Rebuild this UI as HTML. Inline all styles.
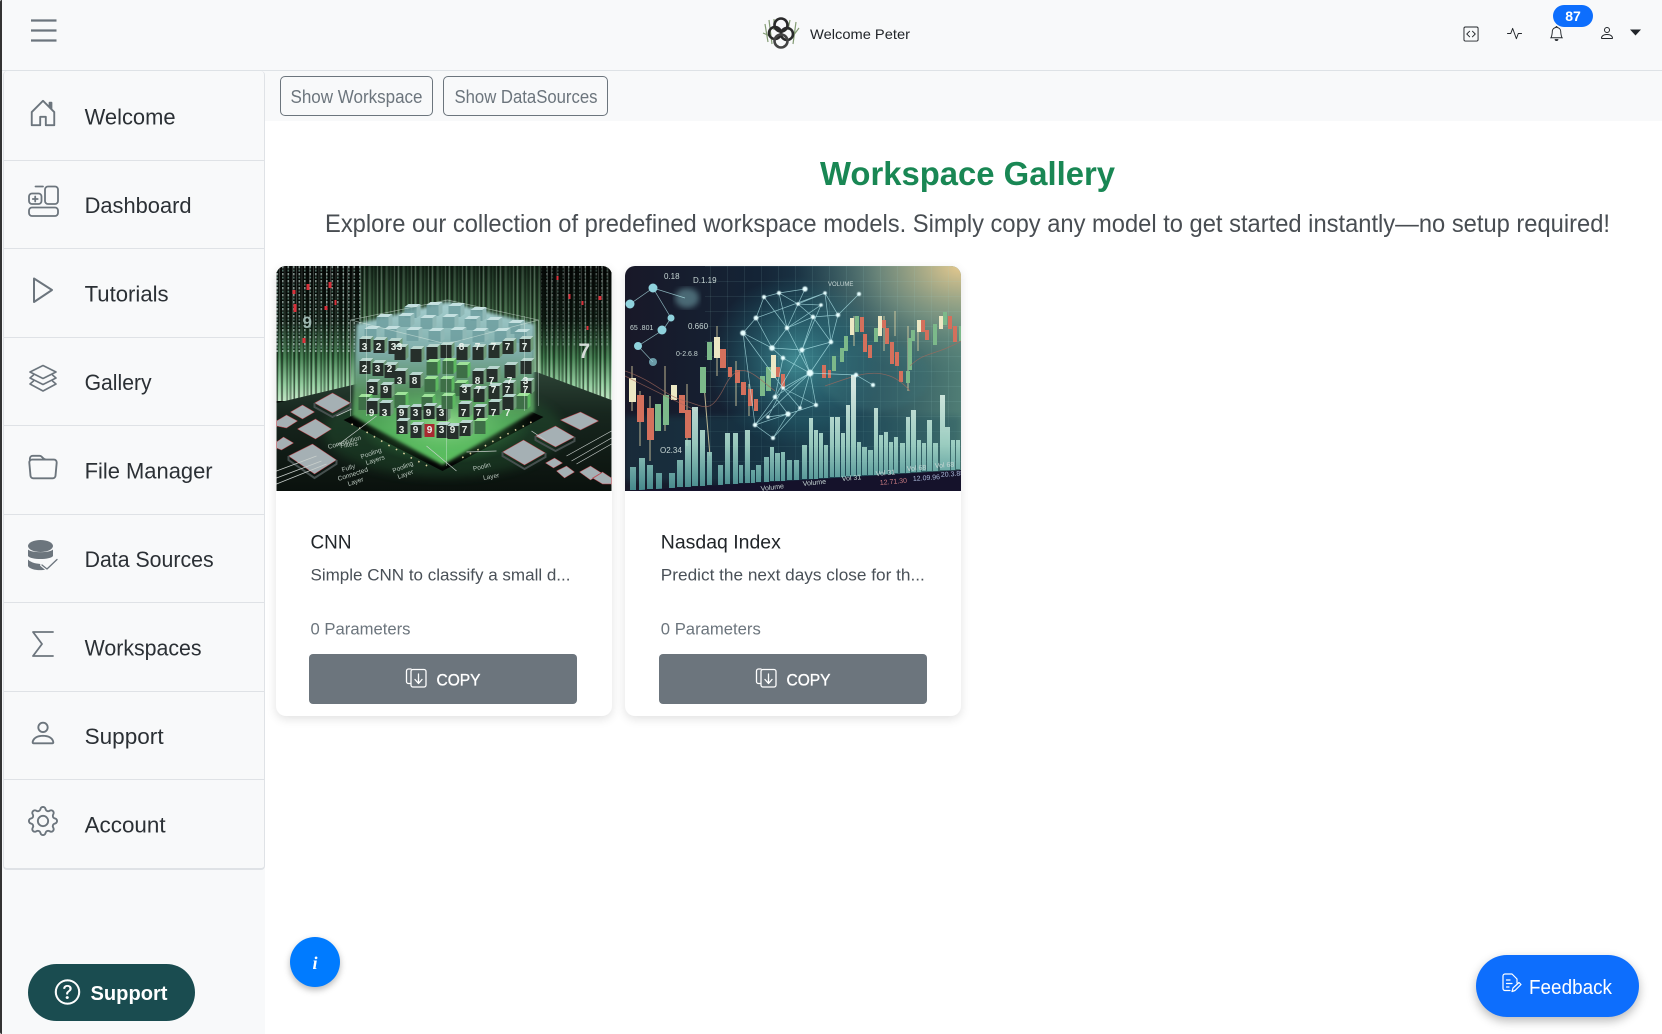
<!DOCTYPE html>
<html lang="en"><head><meta charset="utf-8"><title>Workspace Gallery</title>
<style>
html,body{margin:0;padding:0;width:1662px;height:1034px;overflow:hidden;background:#fff;font-family:"Liberation Sans",sans-serif}
.a{position:absolute;box-sizing:border-box}
#overlay{position:absolute;left:0;top:0;z-index:5}
#overlay text{font-family:"Liberation Sans",sans-serif}
.item{position:absolute;left:0;width:100%;border-bottom:1px solid #dfe2e6;box-sizing:border-box}
.card{position:absolute;top:266px;height:450px;background:#fff;border-radius:10px;box-shadow:0 3px 10px rgba(0,0,0,.12);overflow:hidden}
.card svg{display:block}
.btn{position:absolute;top:654px;width:268px;height:50px;background:#6c757d;border-radius:4px}
.ob{position:absolute;top:76px;height:39.5px;border:1px solid #6c757d;border-radius:5px;box-sizing:border-box}
</style></head><body>
<div class="a" style="left:0;top:0;width:1662px;height:71px;background:#f8f9fa;border-bottom:1px solid #dee2e6"></div>
<div class="a" style="left:264px;top:71px;width:1398px;height:50px;background:#f8f9fa"></div>
<div class="a" style="left:2px;top:71px;width:263px;height:963px;background:#f8f9fa"></div>
<div class="a" style="left:3px;top:71px;width:262px;height:799px;background:#f8f9fa;border:1px solid #dfe2e6;border-bottom-width:2px;border-top:0;border-radius:4px;overflow:hidden">
<div class="item" style="top:0;height:90px"></div>
<div class="item" style="top:90px;height:88px"></div>
<div class="item" style="top:178px;height:89px"></div>
<div class="item" style="top:267px;height:88px"></div>
<div class="item" style="top:355px;height:89px"></div>
<div class="item" style="top:444px;height:88px"></div>
<div class="item" style="top:532px;height:89px"></div>
<div class="item" style="top:621px;height:88px"></div>
</div>
<div class="a" style="left:0;top:0;width:2.3px;height:1034px;background:#333;border-radius:2px 0 0 2px"></div>
<div class="ob" style="left:280px;width:152.5px"></div>
<div class="ob" style="left:443px;width:165px"></div>

<div class="card" style="left:276px;width:335.5px"><svg width="336" height="225" viewBox="0 0 335 225">
<defs>
<linearGradient id="s1" x1="0" y1="0" x2="0" y2="1"><stop offset="0" stop-color="#050806"/><stop offset=".4" stop-color="#0d1a11"/><stop offset=".68" stop-color="#3f7a4c"/><stop offset=".88" stop-color="#8cc898"/><stop offset="1" stop-color="#bde3c0"/></linearGradient>
<linearGradient id="s2" x1="0" y1="0" x2="0" y2="1"><stop offset="0" stop-color="#1a2f20"/><stop offset=".45" stop-color="#44704a"/><stop offset=".8" stop-color="#8fc294"/><stop offset="1" stop-color="#d0ecd0"/></linearGradient>
<linearGradient id="fl" x1="0" y1="0" x2="0" y2="1"><stop offset="0" stop-color="#2c4235"/><stop offset=".35" stop-color="#17261e"/><stop offset="1" stop-color="#0a110d"/></linearGradient>
<linearGradient id="gl" x1="0" y1="0" x2="0" y2="1"><stop offset="0" stop-color="#a6cfd0"/><stop offset=".3" stop-color="#7fadaa"/><stop offset=".55" stop-color="#568f5e"/><stop offset=".8" stop-color="#4ea555"/><stop offset="1" stop-color="#5fc260"/></linearGradient>
<radialGradient id="gw"><stop offset="0" stop-color="#b5f5a8" stop-opacity=".7"/><stop offset="1" stop-color="#3fbf55" stop-opacity="0"/></radialGradient>
<pattern id="st" width="17" height="20" patternUnits="userSpaceOnUse"><rect x="0" width="1.5" height="20" fill="#000" opacity=".55"/><rect x="2.5" width=".8" height="20" fill="#fff" opacity=".25"/><rect x="4.5" width="2" height="20" fill="#000" opacity=".45"/><rect x="8" width=".8" height="20" fill="#fff" opacity=".18"/><rect x="10" width="1.2" height="20" fill="#000" opacity=".5"/><rect x="13" width="2" height="20" fill="#000" opacity=".35"/><rect x="15.6" width=".7" height="20" fill="#fff" opacity=".22"/></pattern>
<pattern id="cd" width="5.5" height="7" patternUnits="userSpaceOnUse"><rect x="0" y="0" width="1.6" height="2.4" fill="#cfe7e0" opacity=".6"/><rect x="0" y="3.6" width="1.6" height="2" fill="#8fc0b0" opacity=".55"/></pattern>
<filter id="b1"><feGaussianBlur stdDeviation="1.6"/></filter>
<filter id="b3"><feGaussianBlur stdDeviation="5"/></filter>
<symbol id="b" overflow="visible"><path d="M0 3h11v13H0z" fill="#262f2b"/><path d="M0 3l3-3h11l-3 3z" fill="#b9d6cf"/><path d="M11 3l3-3v13l-3 3z" fill="#6f9a78"/></symbol>
<symbol id="t" overflow="visible"><path d="M0 3h12v11H0z" fill="#6f9fa0" opacity=".85"/><path d="M0 3l4-3h12l-4 3z" fill="#c4e0e0"/><path d="M12 3l4-3v11l-4 3z" fill="#8fb8b6"/></symbol>
<symbol id="g" overflow="visible"><path d="M0 3h11v13H0z" fill="#3e6f47"/><path d="M0 3l3-3h11l-3 3z" fill="#9fe39a"/><path d="M11 3l3-3v13l-3 3z" fill="#5cb860"/></symbol>
</defs>
<rect width="335" height="225" fill="#070b08"/>
<rect width="335" height="135" fill="url(#s1)"/>
<rect x="84" width="180" height="135" fill="url(#s2)"/>
<rect width="335" height="135" fill="url(#st)"/>
<rect x="0" y="0" width="84" height="86" fill="url(#cd)"/>
<rect x="265" y="0" width="70" height="80" fill="url(#cd)" opacity=".55"/>
<path d="M30 18h3v6h-3zM52 16h3v6h-3zM17 38h3v8h-3zM26 72h3v5h-3zM58 34h2v5h-2zM292 28h2v5h-2zM305 35h2v4h-2zM322 30h3v4h-3zM310 60h2v4h-2zM280 10h2v4h-2zM16 24h3v4h-3zM48 40h3v4h-3z" fill="#d8303a"/>
<text x="26" y="62" font-size="17" fill="#9fb9b2" font-weight="bold">9</text>
<text x="302" y="92" font-size="21" fill="#d5dcd8" font-weight="bold">7</text>
<path d="M0 137 80 118 260 106 335 134V225H0Z" fill="url(#fl)"/>
<ellipse cx="167" cy="165" rx="120" ry="46" fill="#2c6a3a" opacity=".3" filter="url(#b3)"/>
<path d="M67 154 167 108 267 151 166 205Z" fill="#040605"/>
<path d="M80 58 171 36 258 58V145L166 199 76 150Z" fill="url(#gl)" filter="url(#b1)"/>
<ellipse cx="168" cy="158" rx="88" ry="40" fill="url(#gw)"/>
<g>
<use href="#t" x="128" y="38"/><use href="#t" x="150" y="36"/><use href="#t" x="172" y="37"/><use href="#t" x="194" y="41"/>
<use href="#t" x="100" y="48"/><use href="#t" x="122" y="47"/><use href="#t" x="144" y="49"/><use href="#t" x="166" y="48"/><use href="#t" x="188" y="50"/><use href="#t" x="210" y="51"/><use href="#t" x="232" y="54"/>
<use href="#t" x="88" y="60"/><use href="#t" x="108" y="60"/><use href="#t" x="130" y="61"/><use href="#t" x="152" y="62"/><use href="#t" x="174" y="61"/><use href="#t" x="196" y="62"/><use href="#t" x="218" y="62"/><use href="#t" x="238" y="63"/>
<use href="#b" x="83" y="70"/><use href="#b" x="97" y="71"/><use href="#b" x="112" y="72"/><use href="#b" x="118" y="78"/><use href="#b" x="134" y="80"/><use href="#b" x="150" y="78"/><use href="#b" x="164" y="76"/><use href="#b" x="180" y="78"/><use href="#b" x="196" y="78"/><use href="#b" x="212" y="76"/><use href="#b" x="226" y="72"/><use href="#b" x="243" y="70"/>
<use href="#g" x="150" y="93"/><use href="#g" x="166" y="92"/><use href="#g" x="180" y="96"/>
<use href="#b" x="83" y="92"/><use href="#b" x="96" y="94"/><use href="#b" x="108" y="96"/><use href="#b" x="118" y="102"/><use href="#b" x="133" y="106"/><use href="#b" x="196" y="102"/><use href="#b" x="210" y="100"/><use href="#b" x="228" y="96"/><use href="#b" x="244" y="92"/>
<use href="#g" x="148" y="110"/><use href="#g" x="164" y="110"/><use href="#g" x="178" y="114"/>
<use href="#b" x="90" y="113"/><use href="#b" x="104" y="116"/><use href="#b" x="183" y="118"/><use href="#b" x="197" y="120"/><use href="#b" x="212" y="117"/><use href="#b" x="226" y="114"/><use href="#b" x="244" y="112"/>
<use href="#g" x="82" y="128"/><use href="#b" x="90" y="132"/><use href="#b" x="103" y="134"/><use href="#g" x="118" y="126"/><use href="#b" x="120" y="139"/><use href="#b" x="134" y="138"/><use href="#g" x="145" y="128"/><use href="#b" x="147" y="137"/><use href="#b" x="160" y="139"/><use href="#g" x="165" y="127"/><use href="#b" x="182" y="135"/><use href="#b" x="197" y="138"/><use href="#b" x="212" y="133"/><use href="#b" x="226" y="128"/><use href="#g" x="240" y="127"/>
<use href="#b" x="120" y="152"/><use href="#b" x="134" y="156"/><use href="#b" x="160" y="156"/><use href="#b" x="171" y="157"/><use href="#b" x="183" y="154"/><use href="#g" x="198" y="152"/>
</g>
<path d="M148 158h10v13h-10z" fill="#a82a30"/>
<g font-size="10" fill="#eaf2ec" font-weight="bold" text-anchor="middle">
<text x="88 102 117 123 139 185 201 217 231 248" y="84">3233 87777</text>
<text x="88 101 113" y="106">232</text><text x="123 138 201 215 233 249" y="118">388773</text>
<text x="95 109 188 202 217 231 249" y="127">3937777</text>
<text x="95 108 125 139 152 165 187 202 217 231" y="150">9393937777</text>
<text x="125 139 153 165 176 188" y="167">399397</text>
</g>
<path d="M74 54 171 34 262 54V140M74 54V150M74 54 170 78 262 54M170 78V200M90 50V150M248 50V145" fill="none" stroke="#dfeee6" stroke-width=".7" opacity=".55"/>
<path d="M75 158l10 5 10 6 10 6 10 6 10 5 10 6 10 5 10 5M255 156l-10 5-10 5-10 5-10 5-10 6-10 5-10 5" fill="none" stroke="#f5e5b0" stroke-width="1.6" stroke-dasharray="1.5 7" opacity=".9"/>
<g fill="#a5b0b4" stroke="#c43b45" stroke-width=".5"><path d="M38 137 56 127 74 137 56 147ZM14 146 26 139 38 146 26 153ZM0 155 10 149 21 155 10 162 0 160ZM21 163 39 153 55 163 39 173ZM0 176 7 171 17 177 5 184 0 182ZM12 190 36 178 60 194 38 208ZM284 154 304 146 322 155 304 164ZM259 170 279 160 298 171 279 181ZM226 186 247 174 269 187 248 199ZM269 197 278 192 286 197 277 202ZM280 205 290 200 298 206 288 212ZM303 206 314 200 325 207 314 214ZM316 212 326 206 335 212V218H326Z"/></g>
<path d="M38 137V141L56 151 74 141V137M12 190V194L38 212 60 198V194M226 186V190L248 203 269 191V187M259 170V174L279 185 298 175V171" fill="none" stroke="#46504f" stroke-width="2"/>
<path d="M0 205 40 190M0 212 45 195M0 218 50 198M290 190 335 165M295 195 335 172M300 198 335 178M75 143 60 150M60 180 100 150M180 205 150 180M270 175 255 165M190 186 220 185" fill="none" stroke="#c9cfcc" stroke-width=".7"/>
<g font-size="6.5" fill="#b9c6bd">
<text transform="translate(52 183) rotate(-16)">Convolution</text><text transform="translate(64 182) rotate(-8)">Filters</text>
<text transform="translate(85 193) rotate(-20)">Pooling</text><text transform="translate(90 199) rotate(-18)">Layers</text>
<text transform="translate(66 206) rotate(-18)">Fully</text><text transform="translate(62 215) rotate(-18)">Connected</text><text transform="translate(72 220) rotate(-18)">Layer</text>
<text transform="translate(117 207) rotate(-22)">Pooling</text><text transform="translate(122 213) rotate(-20)">Layer</text>
<text transform="translate(197 205) rotate(-14)">Poolin</text><text transform="translate(207 214) rotate(-10)">Layer</text>
</g>
</svg></div>

<div class="card" style="left:625px;width:336px"><svg width="336" height="225" viewBox="0 0 336 225">
<defs>
<linearGradient id="f1" x1="0" y1="0" x2="1" y2="0"><stop offset="0" stop-color="#181828"/><stop offset=".4" stop-color="#142436"/><stop offset=".7" stop-color="#234857"/><stop offset="1" stop-color="#507d75"/></linearGradient>
<radialGradient id="f2" cx="1" cy="0" r=".5"><stop offset="0" stop-color="#e6c98e"/><stop offset=".5" stop-color="#93a68c" stop-opacity=".6"/><stop offset="1" stop-color="#4b7b78" stop-opacity="0"/></radialGradient>
<linearGradient id="f3" gradientUnits="userSpaceOnUse" x1="0" y1="120" x2="0" y2="225"><stop offset="0" stop-color="#e4f4ec"/><stop offset=".55" stop-color="#a6d8ca"/><stop offset="1" stop-color="#4a9496"/></linearGradient>
<radialGradient id="f4"><stop offset="0" stop-color="#5fd0d2" stop-opacity=".55"/><stop offset="1" stop-color="#2ba5b0" stop-opacity="0"/></radialGradient>
<pattern id="gr" width="17" height="15" patternUnits="userSpaceOnUse"><path d="M17 0H0V15" fill="none" stroke="#9ccfca" stroke-width=".5" opacity=".4"/></pattern>
<filter id="bb"><feGaussianBlur stdDeviation="3"/></filter>
<filter id="bs"><feGaussianBlur stdDeviation=".6"/></filter>
</defs>
<rect width="336" height="225" fill="url(#f1)"/>
<rect width="336" height="225" fill="url(#f2)"/>
<rect x="80" width="256" height="210" fill="url(#gr)"/>
<rect x="0" y="150" width="336" height="65" fill="#1f505c" opacity=".35" filter="url(#bb)"/>
<ellipse cx="170" cy="95" rx="88" ry="85" fill="url(#f4)"/>
<ellipse cx="62" cy="32" rx="12" ry="10" fill="#7fb5bc" opacity=".5" filter="url(#bb)"/>
<ellipse cx="250" cy="110" rx="55" ry="35" fill="#3d7378" opacity=".35" filter="url(#bb)"/>
<path d="M78 107 85 190M92 60V110M111 95V140M124 118V150M229 50V80M259 50V85M270 45V70M283 60V125M293 55V85M40 100V165M62 118V180M25 130V195M15 125V180M7 100V145" stroke="#e6d9a8" stroke-width="1" opacity=".8"/>
<g fill="#7cb98a"><path d="M30 138h6V165h-6zM38 129h6V159h-6zM75 101h6V127h-6zM82 76h5V94h-5zM135 110h5V130h-5zM141 101h5V125h-5zM207 90h4V105h-4zM215 82h4V96h-4zM219 70h4V85h-4zM230 50h4V66h-4zM249 62h4V76h-4zM281 105h4V117h-4zM283 72h4V104h-4zM286 64h4V75h-4zM308 58h4V79h-4zM318 46h4V59h-4zM334 60h2V75h-2z"/></g>
<g fill="#ece8c4"><path d="M4 112h7V136H4zM46 119h6V134h-6zM89 71h6V92h-6zM146 89h5V112h-5zM225 52h4V69h-4zM253 50h4V70h-4zM292 54h4V66h-4zM314 50h4V63h-4z"/></g>
<g fill="#d4705c"><path d="M12 129h7V156h-7zM22 142h7V174h-7zM54 129h6V147h-6zM60 144h6V172h-6zM95 83h6V102h-6zM103 101h4V111h-4zM110 104h5V117h-5zM116 116h5V129h-5zM123 123h5V140h-5zM129 133h4V145h-4zM151 101h4V111h-4zM156 108h4V122h-4zM197 99h4V112h-4zM203 104h3V112h-3zM235 51h4V66h-4zM238 68h4V86h-4zM243 79h4V92h-4zM257 54h4V62h-4zM260 62h4V78h-4zM265 76h4V98h-4zM270 86h4V100h-4zM274 105h4V116h-4zM296 54h4V66h-4zM300 64h4V74h-4zM323 50h4V63h-4zM328 60h4V76h-4z"/></g>
<path d="M0 105C30 115 40 130 60 135S85 150 100 120 130 110 150 125M0 110C20 120 50 135 72 145M285 100C300 85 310 90 336 75M200 120C230 110 260 95 285 125" fill="none" stroke="#a56a5c" stroke-width=".8" opacity=".7"/>
<path d="M5 201h6V224H5zM14 192h6V224h-6zM22 199h6V223h-6zM31 207h6V223h-6zM44 207h6V222h-6zM52 194h6V221h-6zM60 174h6V221h-6zM67 141h6V220h-6zM75 164h5V220h-5zM82 186h5V219h-5zM93 199h5V219h-5zM100 167h5V218h-5zM108 167h5V218h-5zM114 199h4V217h-4zM120 164h5V217h-5zM126 204h4V217h-4zM131 199h5V216h-5zM139 191h5V216h-5zM145 181h4V215h-4zM150 187h5V215h-5zM156 186h4V215h-4zM162 194h5V214h-5zM169 194h5V214h-5zM177 179h5V213h-5zM184 152h4V213h-4zM189 164h4V213h-4zM194 167h4V212h-4zM199 179h4V212h-4zM205 151h4V211h-4zM210 151h5V211h-5zM216 167h4V211h-4zM221 139h4V210h-4zM226 109h5V210h-5zM232 176h4V210h-4zM237 181h5V209h-5zM243 184h5V209h-5zM249 142h4V209h-4zM254 169h4V208h-4zM259 166h4V208h-4zM264 176h4V208h-4zM269 171h4V207h-4zM275 177h5V207h-5zM281 151h4V207h-4zM286 144h5V206h-5zM292 174h4V206h-4zM297 177h4V205h-4zM302 154h5V205h-5zM308 177h5V205h-5zM315 129h5V204h-5zM320 161h5V204h-5zM326 174h4V204h-4zM331 174h4V203h-4z" fill="url(#f3)" opacity=".9"/>
<path d="M0 225H336V204Z" fill="#15122b"/>
<path d="M180 23 154 27 139 31 131 52 118 67 147 82 162 62 196 39 173 38 188 51 162 62 147 82 177 84 185 107 206 76 188 51 213 49 234 28M118 67 147 82 158 92 185 107 162 62 154 27 173 38 200 27 213 49 188 51 177 84 196 39M147 82 158 92 150 131 163 148 130 159 185 107 191 139 163 148M185 107 150 131 130 159M206 76 185 107 231 109 248 119M118 67 130 159M177 84 150 131M175 142 185 107M131 52 200 27M118 67 158 122 185 107M143 151 158 122 175 142 148 172 130 159M143 151 163 148 148 172M139 31 162 62 180 23M200 27 206 76 213 49M177 84 206 76M147 82 131 52M158 122 191 139M5 38 28 22 46 52 38 64 13 80 28 96M28 22 60 32M46 52 38 64" fill="none" stroke="#b9f0f4" stroke-width=".7" opacity=".7"/>
<g fill="#e6feff" filter="url(#bs)"><circle cx="180" cy="23" r="2.6"/><circle cx="154" cy="27" r="2"/><circle cx="139" cy="31" r="2"/><circle cx="200" cy="27" r="1.8"/><circle cx="234" cy="28" r="2"/><circle cx="213" cy="49" r="2.2"/><circle cx="196" cy="39" r="1.8"/><circle cx="173" cy="38" r="1.8"/><circle cx="188" cy="51" r="2.2"/><circle cx="131" cy="52" r="2.4"/><circle cx="162" cy="62" r="2.2"/><circle cx="118" cy="67" r="2.8"/><circle cx="147" cy="82" r="2.8"/><circle cx="177" cy="84" r="2.4"/><circle cx="158" cy="92" r="2.2"/><circle cx="206" cy="76" r="2.2"/><circle cx="185" cy="107" r="3.4"/><circle cx="150" cy="131" r="2.2"/><circle cx="163" cy="148" r="2.6"/><circle cx="130" cy="159" r="2.2"/><circle cx="191" cy="139" r="2"/><circle cx="143" cy="151" r="1.8"/><circle cx="148" cy="172" r="2"/><circle cx="175" cy="142" r="1.8"/><circle cx="158" cy="122" r="1.8"/><circle cx="231" cy="109" r="2.2"/><circle cx="248" cy="119" r="2"/></g>
<g fill="#8fd2dd"><circle cx="5" cy="38" r="4.5"/><circle cx="28" cy="22" r="4.5"/><circle cx="46" cy="52" r="3.5"/><circle cx="37" cy="64" r="4.5"/><circle cx="13" cy="80" r="4"/><circle cx="28" cy="96" r="4" opacity=".7"/></g>
<g font-size="7" fill="#c7d6d4">
<text x="39" y="13" font-size="8">0.18</text><text x="68" y="17" font-size="8">D.1.19</text><text x="203" y="20" font-size="6">VOLUME</text><text x="5" y="64" font-size="7">65 .801</text><text x="63" y="63" font-size="8">0.660</text><text x="51" y="90">0-2.6.8</text><text x="35" y="187" font-size="8">O2.34</text>
<text transform="translate(136 225) rotate(-7)" font-size="7">Volume</text><text transform="translate(178 220) rotate(-6)" font-size="7">Volume</text><text transform="translate(217 215) rotate(-5)" font-size="7">Vol 31</text><text transform="translate(251 210) rotate(-5)" font-size="7">Vol 31</text><text transform="translate(282 205) rotate(-4)" font-size="7">Vol 68</text><text transform="translate(310 202) rotate(-4)" font-size="7">Vol 68</text>
<text transform="translate(255 219) rotate(-5)" font-size="7" fill="#c77a80">12.71.30</text><text transform="translate(288 215) rotate(-4)" font-size="7" fill="#aab8d8">12.09.96</text><text transform="translate(316 211) rotate(-4)" font-size="7" fill="#aab8d8">20.3.88</text>
</g>
</svg></div>

<div class="btn" style="left:309px"></div>
<div class="btn" style="left:659px"></div>
<div class="a" style="left:28px;top:964px;width:167px;height:57px;border-radius:29px;background:#1a4c50"></div>
<div class="a" style="left:290px;top:937px;width:50px;height:50px;border-radius:50%;background:#007bff;box-shadow:0 3px 7px rgba(0,0,0,.28)"></div>
<div class="a" style="left:1476px;top:955px;width:163px;height:62px;border-radius:31px;background:#0d6efd;box-shadow:0 4px 10px rgba(0,0,0,.28)"></div>
<div class="a" style="left:1553px;top:5px;width:40px;height:22px;border-radius:11px;background:#0d6efd"></div>

<svg id="overlay" width="1662" height="1034" viewBox="0 0 1662 1034">
<path d="M31 20.5H56.5M31 30.5H56.5M31 40.5H56.5" stroke="#6c757d" stroke-width="2.2"/>
<path d="M765 24 768 42M769 20 772 44M774 19V30M790 20 788 30M796 22 793 44M799 28 790 40M763 33 770 36" stroke="#6f8b5c" stroke-width="1.2" fill="none" opacity=".85"/>
<g fill="none" stroke="#2a2a2a" stroke-width="2.6"><circle cx="781" cy="25" r="6.5"/><circle cx="775" cy="33" r="6"/><circle cx="787" cy="34" r="6"/><circle cx="781" cy="41" r="6.5" stroke="#444"/></g>
<text x="810" y="39" font-size="14" fill="#212529" textLength="100" lengthAdjust="spacingAndGlyphs">Welcome Peter</text>
<g fill="#212529">
<g transform="translate(1463.5 26.5) scale(.94)"><path d="M14 1a1 1 0 0 1 1 1v12a1 1 0 0 1-1 1H2a1 1 0 0 1-1-1V2a1 1 0 0 1 1-1zM2 0a2 2 0 0 0-2 2v12a2 2 0 0 0 2 2h12a2 2 0 0 0 2-2V2a2 2 0 0 0-2-2z"/><path d="M6.854 4.646a.5.5 0 0 1 0 .708L4.207 8l2.647 2.646a.5.5 0 0 1-.708.708l-3-3a.5.5 0 0 1 0-.708l3-3a.5.5 0 0 1 .708 0m2.292 0a.5.5 0 0 0 0 .708L11.793 8l-2.647 2.646a.5.5 0 0 0 .708.708l3-3a.5.5 0 0 0 0-.708l-3-3a.5.5 0 0 0-.708 0"/></g>
<g transform="translate(1507 26) scale(.94)"><path d="M6 2a.5.5 0 0 1 .47.33L10 12.036l1.53-4.208A.5.5 0 0 1 12 7.5h3.5a.5.5 0 0 1 0 1h-3.15l-1.88 5.17a.5.5 0 0 1-.94 0L6 3.964 4.47 8.171A.5.5 0 0 1 4 8.5H.5a.5.5 0 0 1 0-1h3.15l1.88-5.17A.5.5 0 0 1 6 2"/></g>
<g transform="translate(1549 26) scale(.94)"><path d="M8 16a2 2 0 0 0 2-2H6a2 2 0 0 0 2 2M8 1.918l-.797.161A4 4 0 0 0 4 6c0 .628-.134 2.197-.459 3.742-.16.767-.376 1.566-.663 2.258h10.244c-.287-.692-.502-1.49-.663-2.258C12.134 8.197 12 6.628 12 6a4 4 0 0 0-3.203-3.92zM14.22 12c.223.447.481.801.78 1H1c.299-.199.557-.553.78-1C2.68 10.2 3 6.88 3 6c0-2.42 1.72-4.44 4.005-4.901a1 1 0 1 1 1.99 0A5 5 0 0 1 13 6c0 .88.32 4.2 1.22 6"/></g>
<g transform="translate(1599 25)"><path d="M8 8a3 3 0 1 0 0-6 3 3 0 0 0 0 6m2-3a2 2 0 1 1-4 0 2 2 0 0 1 4 0m4 8c0 1-1 1-1 1H3s-1 0-1-1 1-4 6-4 6 3 6 4m-1-.004c-.001-.246-.154-.986-.832-1.664C11.516 10.68 10.289 10 8 10s-3.516.68-4.168 1.332c-.678.678-.83 1.418-.832 1.664z"/></g>
<path d="M1630 29.5H1641L1635.5 35.5Z"/>
</g>
<text x="1573" y="21" font-size="14" font-weight="bold" fill="#fff" text-anchor="middle">87</text>
<text x="290.5" y="103" font-size="18" fill="#6c757d" textLength="132" lengthAdjust="spacingAndGlyphs">Show Workspace</text>
<text x="454.5" y="103" font-size="18" fill="#6c757d" textLength="143" lengthAdjust="spacingAndGlyphs">Show DataSources</text>
<text x="820" y="185" font-size="33" font-weight="bold" fill="#198754" textLength="295" lengthAdjust="spacingAndGlyphs">Workspace Gallery</text>
<text x="325" y="232" font-size="25" fill="#484d52" textLength="1285" lengthAdjust="spacingAndGlyphs">Explore our collection of predefined workspace models. Simply copy any model to get started instantly—no setup required!</text>
<g font-size="22" fill="#2b3035">
<text x="84.6" y="124.4" textLength="91" lengthAdjust="spacingAndGlyphs">Welcome</text>
<text x="84.6" y="212.8" textLength="107" lengthAdjust="spacingAndGlyphs">Dashboard</text>
<text x="84.6" y="301.4" textLength="84" lengthAdjust="spacingAndGlyphs">Tutorials</text>
<text x="84.6" y="389.8" textLength="67" lengthAdjust="spacingAndGlyphs">Gallery</text>
<text x="84.6" y="478.4" textLength="128" lengthAdjust="spacingAndGlyphs">File Manager</text>
<text x="84.6" y="566.8" textLength="129" lengthAdjust="spacingAndGlyphs">Data Sources</text>
<text x="84.6" y="655.4" textLength="117" lengthAdjust="spacingAndGlyphs">Workspaces</text>
<text x="84.6" y="743.8" textLength="79" lengthAdjust="spacingAndGlyphs">Support</text>
<text x="84.6" y="832.4" textLength="81" lengthAdjust="spacingAndGlyphs">Account</text>
</g>
<g fill="#6c757d">
<g transform="translate(28 98) scale(1.875)"><path d="M8.354 1.146a.5.5 0 0 0-.708 0l-6 6A.5.5 0 0 0 1.5 7.5v7a.5.5 0 0 0 .5.5h4.5a.5.5 0 0 0 .5-.5v-4h2v4a.5.5 0 0 0 .5.5H14a.5.5 0 0 0 .5-.5v-7a.5.5 0 0 0-.146-.354L13 5.793V2.5a.5.5 0 0 0-.5-.5h-1a.5.5 0 0 0-.5.5v1.293zM2.5 14V7.707l5.5-5.5 5.5 5.5V14H10v-4a.5.5 0 0 0-.5-.5h-3a.5.5 0 0 0-.5.5v4z"/></g>
<g transform="translate(28 453) scale(1.875)"><path d="M.54 3.87.5 3a2 2 0 0 1 2-2h3.672a2 2 0 0 1 1.414.586l.828.828A2 2 0 0 0 9.828 3h3.982a2 2 0 0 1 1.992 2.181l-.637 7A2 2 0 0 1 13.174 14H2.826a2 2 0 0 1-1.991-1.819l-.637-7a1.99 1.99 0 0 1 .342-1.31zM2.19 4a1 1 0 0 0-.996 1.09l.637 7a1 1 0 0 0 .995.91h10.348a1 1 0 0 0 .995-.91l.637-7A1 1 0 0 0 13.81 4zm4.69-1.707A1 1 0 0 0 6.172 2H2.5a1 1 0 0 0-1 .981l.006.139q.323-.119.684-.12h5.396z"/></g>
<g transform="translate(28 718) scale(1.875)"><path d="M8 8a3 3 0 1 0 0-6 3 3 0 0 0 0 6m2-3a2 2 0 1 1-4 0 2 2 0 0 1 4 0m4 8c0 1-1 1-1 1H3s-1 0-1-1 1-4 6-4 6 3 6 4m-1-.004c-.001-.246-.154-.986-.832-1.664C11.516 10.68 10.289 10 8 10s-3.516.68-4.168 1.332c-.678.678-.83 1.418-.832 1.664z"/></g>
<g transform="translate(28 806) scale(1.875)"><path d="M8 4.754a3.246 3.246 0 1 0 0 6.492 3.246 3.246 0 0 0 0-6.492M5.754 8a2.246 2.246 0 1 1 4.492 0 2.246 2.246 0 0 1-4.492 0"/><path d="M9.796 1.343c-.527-1.79-3.065-1.79-3.592 0l-.094.319a.873.873 0 0 1-1.255.52l-.292-.16c-1.64-.892-3.433.902-2.54 2.541l.159.292a.873.873 0 0 1-.52 1.255l-.319.094c-1.79.527-1.79 3.065 0 3.592l.319.094a.873.873 0 0 1 .52 1.255l-.16.292c-.892 1.64.901 3.434 2.541 2.54l.292-.159a.873.873 0 0 1 1.255.52l.094.319c.527 1.79 3.065 1.79 3.592 0l.094-.319a.873.873 0 0 1 1.255-.52l.292.16c1.64.893 3.434-.902 2.54-2.541l-.159-.292a.873.873 0 0 1 .52-1.255l.319-.094c1.79-.527 1.79-3.065 0-3.592l-.319-.094a.873.873 0 0 1-.52-1.255l.16-.292c.893-1.64-.902-3.433-2.541-2.54l-.292.159a.873.873 0 0 1-1.255-.52zm-2.633.283c.246-.835 1.428-.835 1.674 0l.094.319a1.873 1.873 0 0 0 2.693 1.115l.291-.16c.764-.415 1.6.42 1.184 1.185l-.159.292a1.873 1.873 0 0 0 1.116 2.692l.318.094c.835.246.835 1.428 0 1.674l-.319.094a1.873 1.873 0 0 0-1.115 2.693l.16.291c.415.764-.42 1.6-1.185 1.184l-.291-.159a1.873 1.873 0 0 0-2.693 1.116l-.094.318c-.246.835-1.428.835-1.674 0l-.094-.319a1.873 1.873 0 0 0-2.692-1.115l-.292.16c-.764.415-1.6-.42-1.184-1.185l.159-.291A1.873 1.873 0 0 0 1.945 8.93l-.319-.094c-.835-.246-.835-1.428 0-1.674l.319-.094A1.873 1.873 0 0 0 3.06 4.377l-.16-.292c-.415-.764.42-1.6 1.185-1.184l.292.159a1.873 1.873 0 0 0 2.692-1.115z"/></g>
<ellipse cx="40.5" cy="546" rx="12.5" ry="6"/>
<path d="M28 549.5C31 553 50 553 53 549.5V556C50 560 31 560 28 556ZM28 559.5C31 563 38 564 42 564L46 569.5C40 571 30 570 28 566Z"/>
</g>
<g fill="none" stroke="#6c757d" stroke-width="1.8" stroke-linejoin="round" stroke-linecap="round">
<rect x="29" y="207.5" width="29" height="8.5" rx="3"/><rect x="45" y="186.5" width="13" height="17.5" rx="3"/><rect x="29" y="193.5" width="12.5" height="10.5" rx="3"/><path d="M35.5 186.5H43M35.2 196.5V201.5M32.8 199H37.7"/>
<path d="M34 278.5 52 290 34 302Z" stroke-width="2"/>
<path d="M43 365.5 56 372 43 378.5 30 372ZM33.5 375 30 378 43 384.5 56 378 52.5 375M33.5 381 30 384 43 391 56 384 52.5 381" stroke-width="1.6"/>
<path d="M53 632H33L42 644 33 656H53"/>
<path d="M42 565 47 569 57 559.5" stroke="#f8f9fa" stroke-width="3.6"/><path d="M42 565 47 569 57 559.5" stroke-width="1.3"/>
</g>
<g fill="#212529">
<text x="310.5" y="548.5" font-size="19" textLength="41" lengthAdjust="spacingAndGlyphs">CNN</text>
<text x="660.8" y="548.5" font-size="19" textLength="120" lengthAdjust="spacingAndGlyphs">Nasdaq Index</text>
</g>
<g fill="#495057" font-size="17">
<text x="310.5" y="580.5" textLength="260" lengthAdjust="spacingAndGlyphs">Simple CNN to classify a small d...</text>
<text x="660.8" y="580.5" textLength="264" lengthAdjust="spacingAndGlyphs">Predict the next days close for th...</text>
</g>
<g fill="#6c757d" font-size="17">
<text x="310.5" y="634.5" textLength="100" lengthAdjust="spacingAndGlyphs">0 Parameters</text>
<text x="660.8" y="634.5" textLength="100" lengthAdjust="spacingAndGlyphs">0 Parameters</text>
</g>
<g fill="#fff" font-size="17" stroke="#fff" stroke-width=".35">
<text x="436.5" y="685.5" textLength="44" lengthAdjust="spacingAndGlyphs">COPY</text>
<text x="786.5" y="685.5" textLength="44" lengthAdjust="spacingAndGlyphs">COPY</text>
</g>
<g fill="none" stroke="#fff" stroke-width="1.3" stroke-linecap="round" stroke-linejoin="round">
<path d="M413 669.5H424a2 2 0 0 1 2 2V685a2 2 0 0 1-2 2H413a2 2 0 0 1-2-2V671.5a2 2 0 0 1 2-2ZM411 683.5H408.5a2 2 0 0 1-2-2V671a2 2 0 0 1 2-2H411M418.5 674V683M415 679.5 418.5 683.5 422 679.5"/>
<path d="M763 669.5H774a2 2 0 0 1 2 2V685a2 2 0 0 1-2 2H763a2 2 0 0 1-2-2V671.5a2 2 0 0 1 2-2ZM761 683.5H758.5a2 2 0 0 1-2-2V671a2 2 0 0 1 2-2H761M768.5 674V683M765 679.5 768.5 683.5 772 679.5"/>
</g>
<g transform="translate(55 979.5) scale(1.5625)" fill="#fff"><path d="M8 15A7 7 0 1 1 8 1a7 7 0 0 1 0 14m0 1A8 8 0 1 0 8 0a8 8 0 0 0 0 16" stroke="#fff" stroke-width=".3"/><path d="M5.255 5.786a.237.237 0 0 0 .241.247h.825c.138 0 .248-.113.266-.25.09-.656.54-1.134 1.342-1.134.686 0 1.314.343 1.314 1.168 0 .635-.374.927-.965 1.371-.673.489-1.206 1.06-1.168 1.987l.003.217a.25.25 0 0 0 .25.246h.811a.25.25 0 0 0 .25-.25v-.105c0-.718.273-.927 1.01-1.486.609-.463 1.244-.977 1.244-2.056 0-1.511-1.276-2.241-2.673-2.241-1.267 0-2.655.59-2.75 2.286m1.557 5.763c0 .533.425.927 1.01.927.609 0 1.028-.394 1.028-.927 0-.552-.42-.94-1.029-.94-.584 0-1.009.388-1.009.94"/></g>
<text x="90.5" y="1000" font-size="20" font-weight="bold" fill="#fff" textLength="77" lengthAdjust="spacingAndGlyphs">Support</text>
<text x="315" y="969" font-size="18" font-weight="bold" font-style="italic" fill="#fff" text-anchor="middle" style="font-family:'Liberation Serif',serif">i</text>
<g fill="none" stroke="#fff" stroke-width="1.2" stroke-linecap="round" stroke-linejoin="round"><path d="M1510 990.5H1505a2 2 0 0 1-2-2V976a2 2 0 0 1 2-2H1512L1517 979V983M1506.5 980H1510M1506.5 983.5H1512M1506.5 987H1509"/><path d="M1512 991.5 1513 988 1519 982.5 1521 984.5 1515 990.5Z"/></g>
<text x="1529" y="994" font-size="20" fill="#fff" textLength="83" lengthAdjust="spacingAndGlyphs">Feedback</text>
</svg>
</body></html>
